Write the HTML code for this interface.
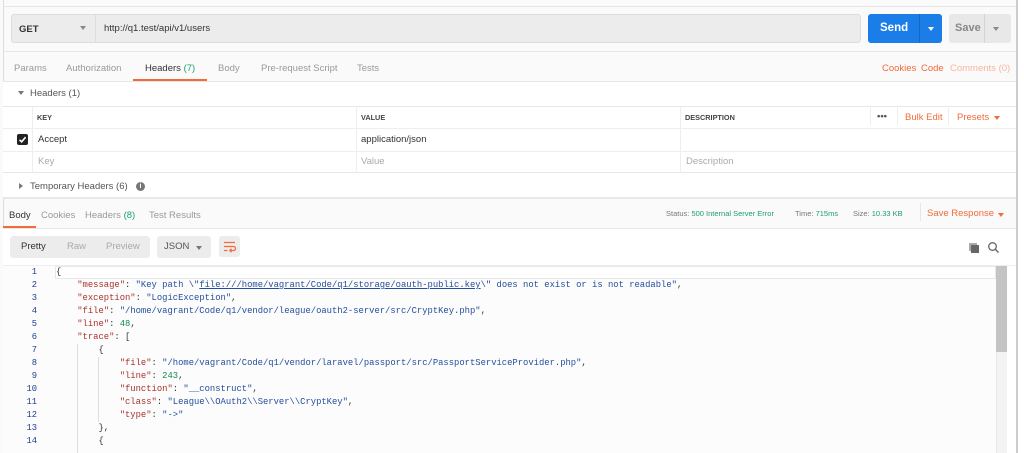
<!DOCTYPE html>
<html><head><meta charset="utf-8"><style>
*{box-sizing:border-box;margin:0;padding:0}
body{width:1024px;height:453px;overflow:hidden;background:#fafafa;font-family:"Liberation Sans",sans-serif;font-size:9.5px;color:#505050;position:relative}
.a{position:absolute}
.code{font-family:"Liberation Mono",monospace;font-size:8.8px;white-space:pre;line-height:13px}
.k{color:#a7332d}.s{color:#244e9c}.n{color:#0f8a4e}.p{color:#333}
.or{color:#f26b3a}
</style></head><body>
<div class="a" style="left:3px;top:0;width:1014px;height:453px;background:#fafafa;border-left:1px solid #ddd"></div>
<div class="a" style="left:1016px;top:0;width:8px;height:453px;background:#fff;border-left:2px solid #ccc"></div>
<div class="a" style="left:3px;top:6px;width:1013px;height:1px;background:#e6e6e6"></div>
<div class="a" style="left:11px;top:14px;width:850px;height:29px;background:#ececec;border:1px solid #ddd;border-radius:3px"></div>
<div class="a" style="left:95px;top:14px;width:1px;height:29px;background:#ddd"></div>
<div class="a" style="left:19px;top:24px;font-size:9.5px;color:#333;font-weight:bold">GET</div>
<div class="a" style="left:80px;top:26px;width:0;height:0;border-left:3px solid transparent;border-right:3px solid transparent;border-top:4px solid #888"></div>
<div class="a" style="left:104px;top:23px;font-size:9.5px;color:#333">http://q1.test/api/v1/users</div>
<div class="a" style="left:868px;top:14px;width:74px;height:29px;background:#1b7ee8;border-radius:3px"></div>
<div class="a" style="left:919px;top:14px;width:1px;height:29px;background:#1667c0"></div>
<div class="a" style="left:880px;top:22px;color:#fff;font-size:11.5px;font-weight:bold">Send</div>
<div class="a" style="left:928px;top:27px;border-left:3px solid transparent;border-right:3px solid transparent;border-top:4px solid #fff"></div>
<div class="a" style="left:949px;top:14px;width:62px;height:29px;background:#e8e8e8;border-radius:3px"></div>
<div class="a" style="left:984px;top:14px;width:1px;height:29px;background:#d4d4d4"></div>
<div class="a" style="left:955px;top:22px;color:#888;font-size:11px;font-weight:bold">Save</div>
<div class="a" style="left:993px;top:27px;border-left:3px solid transparent;border-right:3px solid transparent;border-top:4px solid #888"></div>
<div class="a" style="left:3px;top:51px;width:1013px;height:1px;background:#e6e6e6"></div>
<div class="a" style="top:63px;left:14px;color:#999">Params</div>
<div class="a" style="top:63px;left:66px;color:#999">Authorization</div>
<div class="a" style="top:63px;left:145px;color:#333">Headers <span style="color:#1aa06d">(7)</span></div>
<div class="a" style="top:63px;left:218px;color:#999">Body</div>
<div class="a" style="top:63px;left:261px;color:#999">Pre-request Script</div>
<div class="a" style="top:63px;left:357px;color:#999">Tests</div>
<div class="a" style="left:133px;top:79px;width:74px;height:2px;background:#f26b3a"></div>
<div class="a or" style="top:63px;left:882px">Cookies</div>
<div class="a or" style="top:63px;left:921px">Code</div>
<div class="a" style="top:63px;left:950px;color:#f7b59c">Comments (0)</div>
<div class="a" style="left:3px;top:81px;width:1013px;height:1px;background:#e6e6e6"></div>
<div class="a" style="left:3px;top:82px;width:1013px;height:115px;background:#fff"></div>
<div class="a" style="left:18px;top:91px;border-left:3px solid transparent;border-right:3px solid transparent;border-top:4px solid #777"></div>
<div class="a" style="left:30px;top:88px;color:#555;font-size:9.5px">Headers (1)</div>
<div class="a" style="left:3px;top:106px;width:1013px;height:67px;border-top:1px solid #e6e6e6;border-bottom:1px solid #e6e6e6"></div>
<div class="a" style="left:3px;top:128px;width:1013px;height:1px;background:#eee"></div>
<div class="a" style="left:3px;top:151px;width:1013px;height:1px;background:#eee"></div>
<div class="a" style="left:32px;top:106px;width:1px;height:67px;background:#eee"></div>
<div class="a" style="left:356px;top:106px;width:1px;height:67px;background:#eee"></div>
<div class="a" style="left:680px;top:106px;width:1px;height:67px;background:#eee"></div>
<div class="a" style="left:870px;top:108px;width:1px;height:17px;background:#eee"></div>
<div class="a" style="left:897px;top:108px;width:1px;height:17px;background:#eee"></div>
<div class="a" style="left:948px;top:108px;width:1px;height:17px;background:#eee"></div>
<div class="a" style="left:37px;top:113px;font-size:7.3px;font-weight:bold;color:#444">KEY</div>
<div class="a" style="left:361px;top:113px;font-size:7.3px;font-weight:bold;color:#444">VALUE</div>
<div class="a" style="left:685px;top:113px;font-size:7.3px;font-weight:bold;color:#444">DESCRIPTION</div>
<div class="a" style="left:877px;top:111px;font-weight:bold;color:#555">•••</div>
<div class="a or" style="left:905px;top:112px">Bulk Edit</div>
<div class="a or" style="left:957px;top:112px">Presets</div>
<div class="a" style="left:994px;top:116px;border-left:3px solid transparent;border-right:3px solid transparent;border-top:4px solid #f26b3a"></div>
<div class="a" style="left:17px;top:134px;width:11px;height:11px;background:#222;border-radius:2px"></div>
<svg class="a" style="left:17px;top:134px" width="11" height="11"><path d="M2.5 5.8 L4.6 7.8 L8.6 3.2" stroke="#fff" stroke-width="1.6" fill="none"/></svg>
<div class="a" style="left:38px;top:134px;color:#333">Accept</div>
<div class="a" style="left:361px;top:134px;color:#333">application/json</div>
<div class="a" style="left:38px;top:156px;color:#aaa">Key</div>
<div class="a" style="left:361px;top:156px;color:#aaa">Value</div>
<div class="a" style="left:686px;top:156px;color:#aaa">Description</div>
<div class="a" style="left:19px;top:183px;border-top:3px solid transparent;border-bottom:3px solid transparent;border-left:4px solid #777"></div>
<div class="a" style="left:30px;top:181px;color:#555;font-size:9.5px">Temporary Headers (6)</div>
<div class="a" style="left:136px;top:182px;width:9px;height:9px;border-radius:50%;background:#777;color:#fff;font-size:7px;text-align:center;line-height:9px;font-weight:bold">i</div>
<div class="a" style="left:3px;top:197px;width:1013px;height:2px;background:#e8e8e8"></div>
<div class="a" style="top:210px;left:9px;color:#333">Body</div>
<div class="a" style="top:210px;left:41px;color:#999">Cookies</div>
<div class="a" style="top:210px;left:85px;color:#999">Headers <span style="color:#1aa06d">(8)</span></div>
<div class="a" style="top:210px;left:149px;color:#999">Test Results</div>
<div class="a" style="left:3px;top:226px;width:33px;height:2px;background:#f26b3a"></div>
<div class="a" style="top:209px;left:666px;font-size:7.5px;color:#777">Status: <span style="color:#1aa06d">500 Internal Server Error</span></div>
<div class="a" style="top:209px;left:795px;font-size:7.5px;color:#777">Time: <span style="color:#1aa06d">715ms</span></div>
<div class="a" style="top:209px;left:853px;font-size:7.5px;color:#777">Size: <span style="color:#1aa06d">10.33 KB</span></div>
<div class="a" style="left:920px;top:203px;width:1px;height:18px;background:#e6e6e6"></div>
<div class="a or" style="top:208px;left:927px">Save Response</div>
<div class="a" style="left:998px;top:213px;border-left:3px solid transparent;border-right:3px solid transparent;border-top:4px solid #f26b3a"></div>
<div class="a" style="left:3px;top:228px;width:1013px;height:1px;background:#e6e6e6"></div>
<div class="a" style="left:3px;top:229px;width:1013px;height:224px;background:#fff"></div>
<div class="a" style="left:10px;top:236px;width:140px;height:22px;background:#ececec;border-radius:3px"></div>
<div class="a" style="left:21px;top:241px;color:#333">Pretty</div>
<div class="a" style="left:67px;top:241px;color:#aaa">Raw</div>
<div class="a" style="left:106px;top:241px;color:#aaa">Preview</div>
<div class="a" style="left:157px;top:236px;width:54px;height:22px;background:#ececec;border-radius:3px"></div>
<div class="a" style="left:164px;top:241px;color:#555">JSON</div>
<div class="a" style="left:196px;top:246px;border-left:3px solid transparent;border-right:3px solid transparent;border-top:4px solid #777"></div>
<div class="a" style="left:219px;top:236px;width:21px;height:21px;background:#ececec;border-radius:3px"></div>
<svg class="a" style="left:219px;top:236px" width="21" height="21"><path d="M5 6.5H16M5 10.5H14.5a2 2 0 0 1 0 4H11M12.5 12.8 L10.8 14.5 L12.5 16.2M5 14.5H8.5" stroke="#f26b3a" stroke-width="1.3" fill="none"/></svg>
<div class="a" style="left:969px;top:243px;width:8px;height:8px;background:#aaa"></div>
<div class="a" style="left:971px;top:245px;width:8px;height:8px;background:#666"></div>
<svg class="a" style="left:987px;top:241px" width="13" height="13"><circle cx="5.5" cy="5.5" r="3.8" stroke="#666" stroke-width="1.3" fill="none"/><path d="M8.3 8.3L11.5 11.5" stroke="#666" stroke-width="1.4"/></svg>
<div class="a" style="left:3px;top:265px;width:1013px;height:1px;background:#eee"></div>
<div class="a" style="left:3px;top:266px;width:993px;height:187px;background:#fcfcfc"></div>
<div class="a" style="left:55px;top:266px;width:941px;height:13px;border:1px solid #e8e8e8;background:#fff"></div>
<div class="a" style="left:996px;top:266px;width:11px;height:187px;background:#f3f3f3;border-left:1px solid #e6e6e6"></div>
<div class="a" style="left:996px;top:266px;width:11px;height:86px;background:#c4c4c4"></div>
<div class="a" style="left:77px;top:344px;width:1px;height:109px;background:#ddd"></div>
<div class="a" style="left:98px;top:357px;width:1px;height:65px;background:#ddd"></div>
<div class="a code" style="left:10px;top:266px;width:27px;text-align:right;color:#1f3f8f">1
2
3
4
5
6
7
8
9
10
11
12
13
14</div>
<div class="a code p" style="left:56px;top:266px;font-size:8.85px">{
    <span class="k">"message"</span>: <span class="s">"Key path \"<span style="text-decoration:underline">file:///home/vagrant/Code/q1/storage/oauth-public.key</span>\" does not exist or is not readable"</span>,
    <span class="k">"exception"</span>: <span class="s">"LogicException"</span>,
    <span class="k">"file"</span>: <span class="s">"/home/vagrant/Code/q1/vendor/league/oauth2-server/src/CryptKey.php"</span>,
    <span class="k">"line"</span>: <span class="n">48</span>,
    <span class="k">"trace"</span>: [
        {
            <span class="k">"file"</span>: <span class="s">"/home/vagrant/Code/q1/vendor/laravel/passport/src/PassportServiceProvider.php"</span>,
            <span class="k">"line"</span>: <span class="n">243</span>,
            <span class="k">"function"</span>: <span class="s">"__construct"</span>,
            <span class="k">"class"</span>: <span class="s">"League\\OAuth2\\Server\\CryptKey"</span>,
            <span class="k">"type"</span>: <span class="s">"-&gt;"</span>
        },
        {</div>
</body></html>
